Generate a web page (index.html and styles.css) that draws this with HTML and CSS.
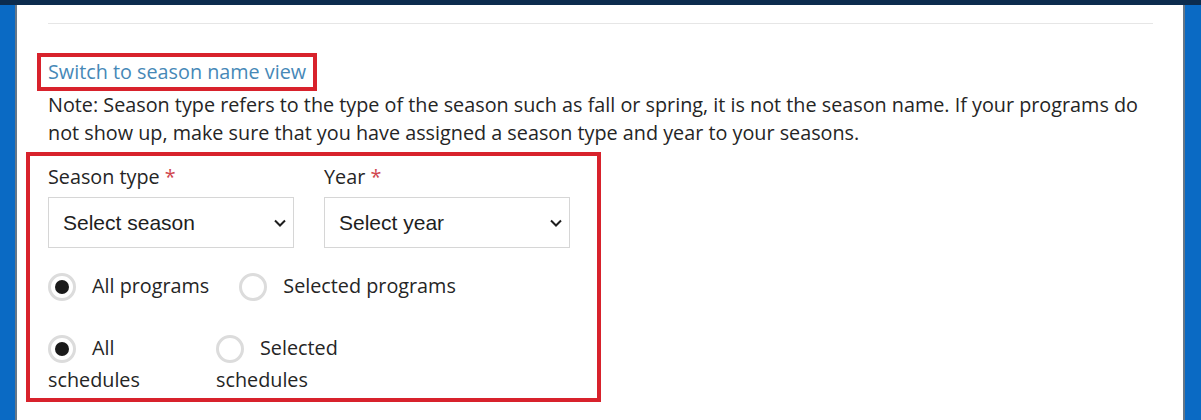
FILE: index.html
```html
<!DOCTYPE html>
<html lang="en">
<head>
<meta charset="utf-8">
<title>Season filter</title>
<link rel="stylesheet" href="styles.css">
</head>
<body>
<div class="topbar"></div>
<div class="frame">
  <main class="panel">
    <hr class="divider">
    <div class="switch-box"><a class="switch-link" href="#">Switch to season name view</a></div>
    <p class="note">Note: Season type refers to the type of the season such as fall or spring, it is not the season name. If your programs do not show up, make sure that you have assigned a season type and year to your seasons.</p>
    <section class="filter-box">
      <div class="fields">
        <div class="field">
          <div class="label">Season type <span class="req">*</span></div>
          <div class="select"><span class="select-text">Select season</span>
            <svg class="chev" width="12" height="8" viewBox="0 0 12 8"><path d="M1 1.5 L6 6.5 L11 1.5" fill="none" stroke="#1e1e1e" stroke-width="2"/></svg>
          </div>
        </div>
        <div class="field">
          <div class="label">Year <span class="req">*</span></div>
          <div class="select"><span class="select-text">Select year</span>
            <svg class="chev" width="12" height="8" viewBox="0 0 12 8"><path d="M1 1.5 L6 6.5 L11 1.5" fill="none" stroke="#1e1e1e" stroke-width="2"/></svg>
          </div>
        </div>
      </div>
      <div class="radio-row">
        <label class="opt"><span class="radio checked"></span>All programs</label>
        <label class="opt"><span class="radio"></span>Selected programs</label>
      </div>
      <div class="radio-row wrap-row">
        <label class="opt narrow"><span class="radio checked"></span>All schedules</label>
        <label class="opt narrow"><span class="radio"></span>Selected schedules</label>
      </div>
    </section>
  </main>
</div>
</body>
</html>
```
FILE: styles.css
```css
html, body {
  margin: 0;
  padding: 0;
  height: 420px;
  overflow: hidden;
  background: #ffffff;
}
body {
  font-family: "Open Sans", "Noto Sans", sans-serif;
  font-size: 19.8px;
  color: #252525;
}
.topbar {
  height: 5px;
  background: #0c2c4e;
}
.frame {
  display: flex;
  height: 415px;
  background: #0a6ac4;
  padding: 0 16px 0 15px;
}
.panel {
  flex: 1;
  background: #ffffff;
  border-left: 2px solid #667788;
  border-right: 2px solid #667788;
  padding: 18px 30px 0 31px;
}
.divider {
  margin: 0;
  border: 0;
  height: 1px;
  background: #e6e6e6;
}
.switch-box {
  display: inline-block;
  margin: 29px 0 0 -11px;
  padding: 3px 7px;
  border: 4px solid #d8222c;
  line-height: 24px;
}
.switch-link {
  color: #4688b7;
  text-decoration: none;
}
.note {
  margin: 0;
  line-height: 28px;
}
.filter-box {
  margin: 5px 0 0 -22px;
  width: 549px;
  border: 4px solid #d8222c;
  padding: 7px 0 2px 18px;
}
.fields {
  display: flex;
  gap: 30px;
}
.field {
  width: 246px;
}
.label {
  line-height: 28px;
  margin-bottom: 6px;
}
.req {
  color: #d0464e;
}
.select {
  display: flex;
  align-items: center;
  justify-content: space-between;
  height: 49px;
  border: 1px solid #d6d6d6;
  padding: 0 7px 0 14px;
  font-family: "Liberation Sans", Arial, sans-serif;
  font-size: 21px;
  color: #1e1e1e;
}
.radio-row {
  display: flex;
  gap: 30px;
  margin-top: 22px;
  line-height: 32px;
}
.wrap-row {
  margin-top: 30px;
  gap: 18px;
}
.opt {
  white-space: nowrap;
}
.opt.narrow {
  white-space: normal;
  width: 150px;
}
.radio {
  display: inline-block;
  box-sizing: border-box;
  width: 28px;
  height: 28px;
  border: 3px solid #dcdcdc;
  border-radius: 50%;
  vertical-align: middle;
  margin: -2px 16px 0 0;
  position: relative;
  background: #fff;
}
.radio.checked::after {
  content: "";
  position: absolute;
  left: 4px;
  top: 4px;
  width: 14px;
  height: 14px;
  border-radius: 50%;
  background: #1a1a1a;
}
```
